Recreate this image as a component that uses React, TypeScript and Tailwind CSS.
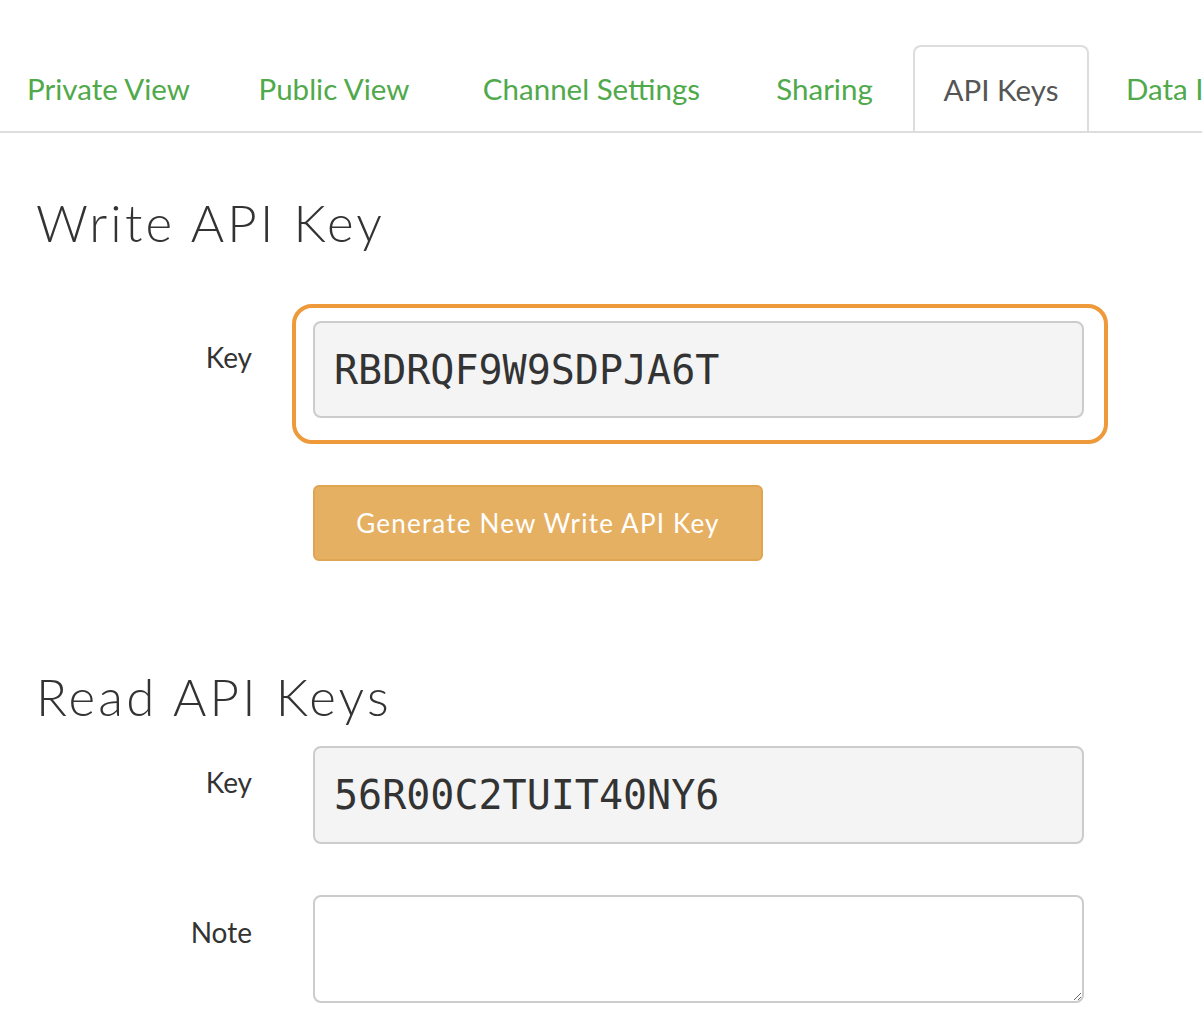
import React from "react";

const tabs = [
  { label: "Private View", w: "w-[225px] -ml-[4px] justify-center" },
  { label: "Public View", w: "w-[216px] justify-center" },
  { label: "Channel Settings", w: "w-[289px] justify-center" },
  { label: "Sharing", w: "w-[167px] justify-center" },
  { label: "API Keys", w: "w-[176px] justify-center", active: true },
  { label: "Data Import / Export", w: "w-[320px] justify-start pl-[32px]" },
];

const sans = "font-['Lato','Noto_Sans',sans-serif]";
const head = "font-['Lato','Open_Sans',sans-serif]";
const mono = "font-['DejaVu_Sans_Mono','Liberation_Mono',monospace]";

function Tabs() {
  return (
    <div className="mt-[45px] flex h-[88px] overflow-hidden border-b-2 border-[#dddddd]">
      {tabs.map((t) =>
        t.active ? (
          <div
            key={t.label}
            className={`${t.w} -mb-[2px] mr-[5px] flex shrink-0 items-center rounded-t-[8px] border-2 border-b-0 border-[#dddddd] bg-white text-[29.5px] text-[#555555] ${sans}`}
          >
            {t.label}
          </div>
        ) : (
          <div
            key={t.label}
            className={`${t.w} mr-[5px] flex shrink-0 items-center whitespace-nowrap pt-[2px] text-[29.5px] text-[#50a94b] ${sans}`}
          >
            {t.label}
          </div>
        )
      )}
    </div>
  );
}

function Row({ label, children, labelPad }: { label: string; children: React.ReactNode; labelPad: string }) {
  return (
    <div className="flex items-start">
      <div className={`w-[252px] shrink-0 text-right text-[28px] leading-[34px] text-[#333333] ${sans} ${labelPad}`}>{label}</div>
      <div className="ml-[61px] w-[771px]">{children}</div>
    </div>
  );
}

export default function App() {
  return (
    <div className="h-[1022px] w-[1202px] overflow-hidden bg-white">
      <Tabs />

      <h1 className={`ml-[36px] mt-[60px] text-[51px] leading-[60px] font-light tracking-[3.2px] text-[#333333] ${head}`}>Write API Key</h1>

      <div className="mt-[68px]">
        <Row label="Key" labelPad="pt-[19px]">
          {/* focus ring around the write key field */}
          <div className="-ml-[21px] -mt-[17px] w-[816px] rounded-[20px] border-4 border-[#ef9a3a] pb-[22px] pl-[17px] pr-[20px] pt-[13px]">
            <div className="flex h-[97px] items-center rounded-[8px] border-2 border-[#cccccc] bg-[#f4f4f4] px-[19px]">
              <span className={`text-[40px] text-[#333333] ${mono}`}>RBDRQF9W9SDPJA6T</span>
            </div>
          </div>
          <button className={`mt-[41px] flex h-[76px] w-[450px] items-center justify-center rounded-[6px] border-2 border-[#dfa552] bg-[#e6b062] text-[26px] font-normal tracking-[1.2px] text-white ${head}`}>
            Generate New Write API Key
          </button>
        </Row>
      </div>

      <h1 className={`ml-[36px] mt-[106px] text-[51px] leading-[60px] font-light tracking-[3.2px] text-[#333333] ${head}`}>Read API Keys</h1>

      <div className="mt-[19px] flex flex-col gap-[51px]">
        <Row label="Key" labelPad="pt-[19px]">
          <div className="flex h-[98px] items-center rounded-[8px] border-2 border-[#cccccc] bg-[#f4f4f4] px-[19px]">
            <span className={`text-[40px] text-[#333333] ${mono}`}>56R00C2TUIT40NY6</span>
          </div>
        </Row>
        <Row label="Note" labelPad="pt-[20px]">
          <textarea className="block h-[108px] w-full resize-y rounded-[8px] border-2 border-[#cccccc] bg-white" />
        </Row>
      </div>
    </div>
  );
}
